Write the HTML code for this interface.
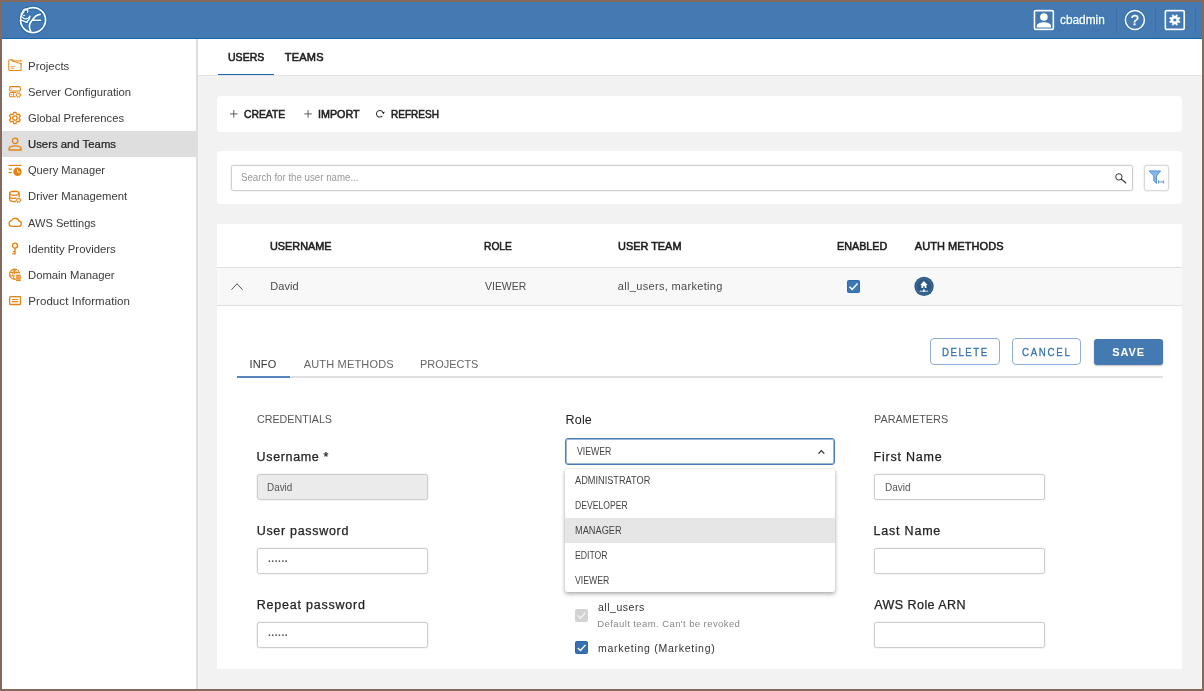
<!DOCTYPE html>
<html lang="en"><head><meta charset="utf-8"><title>CloudBeaver - Users and Teams</title>
<style>
html,body{margin:0;padding:0;}
body{width:1204px;height:691px;position:relative;overflow:hidden;background:#f2f2f2;font-family:"Liberation Sans",sans-serif;}
.a{position:absolute;box-sizing:border-box;}
.t{position:absolute;white-space:pre;transform-origin:0 0;font-family:"Liberation Sans",sans-serif;}
.frame{position:absolute;left:0;top:0;width:1204px;height:691px;box-sizing:border-box;border:2px solid #86695d;pointer-events:none;}
.hdr{left:2px;top:2px;width:1200px;height:37px;background:#4479b1;border-bottom:1.5px solid #1368ad;}
.side{left:2px;top:39px;width:196px;height:650px;background:#fff;border-right:2px solid #dedede;}
.sel{left:2px;top:131px;width:194px;height:26px;background:#dedede;}
.tabs{left:198px;top:39px;width:1004px;height:37px;background:#fff;border-bottom:1px solid #e3e3e3;}
.card{background:#fff;border-radius:4px;}
.inp{background:#fff;border:1px solid #cdcdcd;border-radius:2.5px;box-shadow:0 0 0 .6px rgba(0,0,0,.07);}
.btn{border:1px solid #8eaed6;border-radius:4px;background:#fff;}
svg{position:absolute;overflow:visible;}
.txt{position:absolute;left:0;top:0;width:1204px;height:691px;will-change:transform;}

</style></head>
<body>
<div class="a hdr"></div>
<div class="a side"></div>
<div class="a sel"></div>
<div class="a tabs"></div>
<div class="a" style="left:217.5px;top:73.8px;width:56.5px;height:1.6px;background:#1d68b2;"></div>
<!-- header dividers -->
<div class="a" style="left:1116px;top:8px;width:1px;height:25px;background:rgba(0,0,0,.08);"></div>
<div class="a" style="left:1155px;top:8px;width:1px;height:25px;background:rgba(0,0,0,.08);"></div>
<div class="a" style="left:1195px;top:8px;width:1px;height:25px;background:rgba(0,0,0,.08);"></div>
<!-- cards -->
<div class="a card" style="left:217.3px;top:95.8px;width:965px;height:36.2px;"></div>
<div class="a card" style="left:217.3px;top:151.3px;width:965px;height:52.8px;"></div>
<div class="a inp" style="left:231px;top:165px;width:902px;height:25.5px;"></div>
<div class="a" style="left:1143.6px;top:165px;width:25.6px;height:25.6px;border:1px solid #d9d9d9;border-radius:3px;background:#fff;box-shadow:0 0 0 .7px rgba(0,0,0,.07);"></div>
<div class="a card" style="left:217.4px;top:223.7px;width:964.9px;height:445.3px;border-radius:0;"></div>
<div class="a" style="left:217.4px;top:267px;width:964.9px;height:38.7px;background:#f8f8f8;border-top:1px solid #e1e1e1;border-bottom:1px solid #e1e1e1;"></div>
<!-- inner tabs -->
<div class="a" style="left:237px;top:376.1px;width:925.7px;height:1.8px;background:#e0e0e0;"></div>
<div class="a" style="left:237px;top:376.1px;width:53px;height:1.8px;background:#5585bd;"></div>
<!-- buttons -->
<div class="a btn" style="left:930.3px;top:338.3px;width:69.4px;height:26.4px;"></div>
<div class="a btn" style="left:1012.3px;top:338.3px;width:69px;height:26.4px;"></div>
<div class="a" style="left:1094.3px;top:338.6px;width:68.4px;height:26px;border-radius:3px;background:#4479b1;box-shadow:0 1px 2px rgba(0,0,0,.25);"></div>
<!-- inputs left -->
<div class="a inp" style="left:257px;top:474.3px;width:171px;height:26px;background:#ebebeb;"></div>
<div class="a inp" style="left:257px;top:548.3px;width:171px;height:26px;"></div>
<div class="a inp" style="left:257px;top:622.3px;width:171px;height:26px;"></div>
<!-- inputs right -->
<div class="a inp" style="left:874.2px;top:474.3px;width:170.8px;height:26px;"></div>
<div class="a inp" style="left:874.2px;top:548.3px;width:170.8px;height:26px;"></div>
<div class="a inp" style="left:874.2px;top:622.3px;width:170.8px;height:26px;"></div>
<!-- team checkboxes -->
<div class="a" style="left:575.2px;top:609px;width:12.8px;height:12.6px;border-radius:2px;background:#d2d2d2;"></div>
<svg style="left:575px;top:609px" width="12.8" height="12.6" viewBox="0 0 13 13"><g transform="translate(0.2 0.0)"><path d="M2.6 6.8 L5.3 9.4 L10.6 3.6" fill="none" stroke="#f2f2f2" stroke-width="1.5"/></g></svg>
<div class="a" style="left:575.2px;top:641.4px;width:12.8px;height:12.6px;border-radius:1.5px;background:#3571b2;border:1px solid #2768ae;"></div>
<svg style="left:575px;top:641px" width="12.8" height="12.6" viewBox="0 0 13 13"><g transform="translate(0.2 0.4)"><path d="M2.6 6.8 L5.3 9.4 L10.6 3.6" fill="none" stroke="#fff" stroke-width="1.5"/></g></svg>
<!-- select -->
<div class="a" style="left:565px;top:438px;width:270px;height:27px;border:1px solid #4a7db8;border-radius:3px;background:#fff;box-shadow:inset 0 0 0 1px rgba(74,125,184,.55);"></div>
<svg style="left:818px;top:449px" width="6.8" height="4.6" viewBox="0 0 6.8 4.6"><g transform="translate(0.0 0.5)"><path d="M0.5 4.1 L3.4 1.1 L6.3 4.1" fill="none" stroke="#333" stroke-width="1.3"/></g></svg>
<!-- dropdown -->
<div class="a" style="left:565px;top:468.5px;width:270px;height:123.4px;background:#fff;border-radius:2px;box-shadow:0 2px 4px rgba(0,0,0,.32),0 0 2px rgba(0,0,0,.12);"></div>
<div class="a" style="left:565px;top:518px;width:270px;height:24.6px;background:#e6e6e6;"></div>
<!-- row checkbox -->
<div class="a" style="left:846.8px;top:280px;width:13.2px;height:13px;border-radius:1.5px;background:#3d78b5;border:1px solid #2a6cb1;"></div>
<svg style="left:846px;top:280px" width="13.2" height="13" viewBox="0 0 13 13"><g transform="translate(0.8 0.0)"><path d="M2.6 6.8 L5.3 9.4 L10.6 3.6" fill="none" stroke="#fff" stroke-width="1.5"/></g></svg>
<!-- row chevron -->
<svg style="left:231px;top:283px" width="12" height="7.2" viewBox="0 0 12 7.2"><g transform="translate(0.0 0.0)"><path d="M0.4 6.8 L6 0.8 L11.6 6.8" fill="none" stroke="#555" stroke-width="1"/></g></svg>
<svg style="left:19px;top:6px" width="27" height="27" viewBox="0 0 27 27" fill="none" stroke="#fff" stroke-linecap="round" stroke-linejoin="round"><g transform="translate(0.8 0.5)">
<circle cx="13.25" cy="13.55" r="12.55" stroke="#1463ac" stroke-width="3.4" opacity=".85"/>
<g stroke="#1463ac" opacity=".75" stroke-width="3">
<path d="M20.3 7.8 C18.6 7.9 17.2 8.6 16.1 9.4 C14.9 10.3 14 11.4 13.25 12.5 C12.2 13.9 11.3 15 10.65 16.1 C10 17.3 9.6 18.6 9.6 19.8 C9.6 21.6 10 23.2 10.9 24.6"/><path d="M13.2 13.8 H20.8"/>
<path d="M2.5 10.6 C3.8 12.2 6 12.7 7.9 11.9 C9.1 11.3 9.8 10.5 10.1 9.6 C9.8 12 8.8 13.8 7.4 15"/><path d="M1.6 13.6 L7.4 16"/>
<path d="M1.2 7.6 C2 6.6 2.6 5.8 3 4.8 C3.4 3.6 4.1 2.9 4.9 2.6 C6 2.1 7.2 2.5 7.8 3.6 C8.2 4.4 8.1 5.2 7.8 5.8"/>
</g>
<circle cx="13.25" cy="13.55" r="12.5" stroke-width="1.75"/>
<path d="M1.2 7.6 C2 6.6 2.6 5.8 3 4.8 C3.4 3.6 4.1 2.9 4.9 2.6 C6 2.1 7.2 2.5 7.8 3.6 C8.2 4.4 8.1 5.2 7.8 5.8" stroke-width="1.3"/>
<ellipse cx="4.2" cy="9" rx="1" ry=".8" fill="#fff" stroke="none"/>
<path d="M2.5 10.6 C3.8 12.2 6 12.7 7.9 11.9 C9.1 11.3 9.8 10.5 10.1 9.6" stroke-width="1.35"/>
<path d="M1.6 13.6 L7.4 16 M10.1 9.8 C9.8 12 8.8 13.8 7.4 15" stroke-width="1.4"/>
<path d="M20.3 7.8 C18.6 7.9 17.2 8.6 16.1 9.4 C14.9 10.3 14 11.4 13.25 12.5 C12.2 13.9 11.3 15 10.65 16.1 C10 17.3 9.6 18.6 9.6 19.8 C9.6 21.6 10 23.2 10.9 24.6" stroke-width="1.8"/>
<path d="M13.2 13.8 H20.8" stroke-width="1.5"/>
<circle cx="5.6" cy="4.7" r=".75" fill="#1a3f9a" stroke="none"/>
</g></svg>
<svg style="left:1033px;top:9px" width="20.6" height="20.6" viewBox="0 0 20.6 20.6"><g transform="translate(0.6 0.7)">
<rect x=".85" y=".85" width="18.9" height="18.9" rx="1.2" fill="none" stroke="#1463ac" stroke-width="3" opacity=".45"/>
<rect x=".85" y=".85" width="18.9" height="18.9" rx="1.2" fill="none" stroke="#fff" stroke-width="1.7"/>
<circle cx="10.3" cy="7.3" r="3.8" fill="#fff"/>
<path d="M3.2 17.7 V16.2 C3.2 13.6 7.6 12.5 10.3 12.5 C13 12.5 17.4 13.6 17.4 16.2 V17.7 Z" fill="#fff"/>
</g></svg>
<svg style="left:1124px;top:9px;will-change:transform" width="20.8" height="20.8" viewBox="0 0 20.8 20.8"><g transform="translate(0.5 0.6)">
<circle cx="10.4" cy="10.4" r="9.5" fill="none" stroke="#1463ac" stroke-width="3" opacity=".45"/>
<circle cx="10.4" cy="10.4" r="9.5" fill="none" stroke="#fff" stroke-width="1.6"/>
<text x="10.4" y="15.6" text-anchor="middle" font-family="Liberation Sans, sans-serif" font-size="14.5" fill="#fff" stroke="#fff" stroke-width=".3">?</text>
</g></svg>
<svg style="left:1164px;top:9px" width="20.6" height="20.6" viewBox="0 0 20.6 20.6"><g transform="translate(0.5 0.7)">
<rect x=".85" y=".85" width="18.9" height="18.9" rx="1.2" fill="none" stroke="#1463ac" stroke-width="3" opacity=".45"/>
<rect x=".85" y=".85" width="18.9" height="18.9" rx="1.2" fill="none" stroke="#fff" stroke-width="1.7"/>
<path d="M14.24 11.00 L15.59 11.79 L15.10 12.99 L13.58 12.59 L12.59 13.58 L12.99 15.10 L11.79 15.59 L11.00 14.24 L9.60 14.24 L8.81 15.59 L7.61 15.10 L8.01 13.58 L7.02 12.59 L5.50 12.99 L5.01 11.79 L6.36 11.00 L6.36 9.60 L5.01 8.81 L5.50 7.61 L7.02 8.01 L8.01 7.02 L7.61 5.50 L8.81 5.01 L9.60 6.36 L11.00 6.36 L11.79 5.01 L12.99 5.50 L12.59 7.02 L13.58 8.01 L15.10 7.61 L15.59 8.81 L14.24 9.60 Z M12.1 10.3 A1.8 1.8 0 1 0 8.5 10.3 A1.8 1.8 0 1 0 12.1 10.3 Z" fill="#fff" fill-rule="evenodd" stroke="#fff" stroke-width=".5" stroke-linejoin="round"/>
</g></svg>
<svg style="left:8px;top:59px" width="13.8" height="12.4" viewBox="0 0 13.8 12.4" fill="none" stroke="#e7820e" stroke-width="1.05" stroke-linecap="round" stroke-linejoin="round"><g transform="translate(0.1 0.0)"><path d="M.7 10.5 V1.7 a.9 .9 0 0 1 .9 -.9 H4.7 L5.9 2.1 H11.3 M13 4.2 V10.5 a1 1 0 0 1 -1 1 H1.7 a1 1 0 0 1 -1 -1"/>
<path d="M3.4 1.6 L12.9 4.8" stroke-width="1"/><circle cx="12.7" cy="1.7" r=".85" fill="#e7820e" stroke="none"/>
<path d="M2.9 7.7 H6.9 M2.9 9.3 H5.6" stroke-width=".9" opacity=".8"/></g></svg>
<svg style="left:9px;top:86px" width="12.2" height="11.8" viewBox="0 0 12.2 11.8" fill="none" stroke="#e7820e" stroke-width="1.1" stroke-linecap="round" stroke-linejoin="round"><g transform="translate(0.0 0.0)"><rect x=".65" y=".65" width="10.7" height="4.3" rx="1"/><circle cx="2.8" cy="2.8" r=".65" fill="#e7820e" stroke="none"/>
<path d="M6.3 10.8 H1.65 a1 1 0 0 1 -1 -1 V7.5 a1 1 0 0 1 1 -1 H7"/><circle cx="2.8" cy="8.65" r=".65" fill="#e7820e" stroke="none"/><path d="M4.6 7.5 V9.8" stroke-width=".9"/>
<path d="M11.12 8.47 L11.96 8.54 L11.96 9.46 L11.12 9.53 L10.76 10.14 L11.12 10.90 L10.33 11.36 L9.85 10.66 L9.15 10.66 L8.67 11.36 L7.88 10.90 L8.24 10.14 L7.88 9.53 L7.04 9.46 L7.04 8.54 L7.88 8.47 L8.24 7.86 L7.88 7.10 L8.67 6.64 L9.15 7.34 L9.85 7.34 L10.33 6.64 L11.12 7.10 L10.76 7.86 Z" stroke-width=".95"/></g></svg>
<svg style="left:8px;top:111px" width="12.6" height="12.6" viewBox="0 0 12.6 12.6" fill="none" stroke="#e7820e" stroke-width="1.3" stroke-linecap="round" stroke-linejoin="round"><g transform="translate(0.6 0.7)"><path d="M7.70 10.47 L7.39 12.00 L5.21 12.00 L4.90 10.47 L3.39 9.60 L1.91 10.09 L0.82 8.21 L1.99 7.17 L1.99 5.43 L0.82 4.39 L1.91 2.51 L3.39 3.00 L4.90 2.13 L5.21 0.60 L7.39 0.60 L7.70 2.13 L9.21 3.00 L10.69 2.51 L11.78 4.39 L10.61 5.43 L10.61 7.17 L11.78 8.21 L10.69 10.09 L9.21 9.60 Z"/><circle cx="6.3" cy="6.3" r="2.2"/></g></svg>
<svg style="left:8px;top:137px" width="13.6" height="13.4" viewBox="0 0 13.6 13.4" fill="none" stroke="#e7820e" stroke-width="1.3" stroke-linecap="round" stroke-linejoin="round"><g transform="translate(0.3 0.4)"><circle cx="6.8" cy="3.4" r="2.75" stroke-width="1.3"/><path d="M.75 12.6 V11.5 C.75 9.3 3.7 8.4 6.8 8.4 C9.9 8.4 12.85 9.3 12.85 11.5 V12.6 Z" stroke-width="1.3"/></g></svg>
<svg style="left:8px;top:164px" width="13.6" height="11.8" viewBox="0 0 13.6 11.8" fill="none" stroke="#e7820e" stroke-width="1.3" stroke-linecap="round" stroke-linejoin="round"><g transform="translate(0.3 0.6)"><path d="M.3 .8 H13.3" stroke-width="1.2" stroke-linecap="butt"/><path d="M.3 4.5 H3.5 M.3 8.1 H3.5" stroke-width="1.2" stroke-linecap="butt"/>
<circle cx="9.2" cy="7.2" r="4.2" fill="#e7820e" stroke="none"/><path d="M9.2 4.9 V7.4 H11.3" stroke="#fff" stroke-width="1"/></g></svg>
<svg style="left:9px;top:190px" width="12.2" height="12.2" viewBox="0 0 12.2 12.2" fill="none" stroke="#e7820e" stroke-width="1.3" stroke-linecap="round" stroke-linejoin="round"><g transform="translate(0.0 0.6)"><ellipse cx="5.4" cy="2.7" rx="4.7" ry="2.05"/><path d="M.7 2.7 V9 C.7 10.1 2.7 11 5.4 11 C5.9 11 6.3 10.97 6.7 10.9 M10.1 2.7 V6.2 M.7 5.8 C.7 6.9 2.7 7.8 5.4 7.8 C6 7.8 6.5 7.77 7 7.65"/>
<path d="M11.12 9.11 L11.96 9.16 L11.96 10.04 L11.12 10.09 L10.79 10.67 L11.16 11.42 L10.40 11.86 L9.93 11.17 L9.27 11.17 L8.80 11.86 L8.04 11.42 L8.41 10.67 L8.08 10.09 L7.24 10.04 L7.24 9.16 L8.08 9.11 L8.41 8.53 L8.04 7.78 L8.80 7.34 L9.27 8.03 L9.93 8.03 L10.40 7.34 L11.16 7.78 L10.79 8.53 Z" stroke-width="1"/></g></svg>
<svg style="left:8px;top:217px" width="13.8" height="9.2" viewBox="0 0 13.8 9.2" fill="none" stroke="#e7820e" stroke-width="1.3" stroke-linecap="round" stroke-linejoin="round"><g transform="translate(0.2 0.9)"><path d="M3.6 8.45 H10.5 a2.65 2.65 0 0 0 .35 -5.28 A4.05 4.05 0 0 0 3.3 2.7 A2.9 2.9 0 0 0 3.6 8.45 Z" stroke-width="1.3"/></g></svg>
<svg style="left:11px;top:242px" width="7.2" height="13" viewBox="0 0 7.2 13" fill="none" stroke="#e7820e" stroke-width="1.3" stroke-linecap="round" stroke-linejoin="round"><g transform="translate(0.4 0.3)"><circle cx="3.6" cy="3.3" r="2.5" stroke-width="1.4"/><path d="M3.6 5.9 V12.2 M3.6 9.3 H1.6 M3.6 11.6 H.8" stroke-width="1.4" stroke-linecap="butt"/></g></svg>
<svg style="left:9px;top:268px" width="12.2" height="12.6" viewBox="0 0 12.2 12.6" fill="none" stroke="#e7820e" stroke-width="1.3" stroke-linecap="round" stroke-linejoin="round"><g transform="translate(0.0 0.7)"><path d="M6.4 10.5 A5 5 0 1 1 10.5 4.2" stroke-width="1.3"/><path d="M5.5 .7 C3.2 3.3 3.2 7.7 5.5 10.4 M5.5 .7 C6.9 2.1 7.6 3.3 7.8 4.5 M1 3.8 H10 M1 7.2 H5.8 M5.5 .7 V5" stroke-width=".9"/>
<rect x="7.1" y="6" width="4.8" height="6.2" fill="#f2be94" stroke="none"/><path d="M7.1 6.6 H11.9 M7.1 8.4 H11.9 M7.1 10.2 H11.9 M7.1 11.9 H11.9" stroke-width=".9" stroke-linecap="butt"/></g></svg>
<svg style="left:9px;top:295px" width="12.2" height="9.3" viewBox="0 0 12.2 9.3" fill="none" stroke="#e7820e" stroke-width="1.3" stroke-linecap="round" stroke-linejoin="round"><g transform="translate(0.0 0.9)"><rect x=".7" y=".7" width="10.8" height="7.9" rx=".8" stroke-width="1.3"/><path d="M3.3 3.6 H8.9 M3.3 5.7 H8.9" stroke-width="1.1"/></g></svg>
<svg style="left:229px;top:109px" width="8" height="8" viewBox="0 0 8 8"><g transform="translate(0.8 0.9)"><path d="M4 .2 V7.8 M.2 4 H7.8" stroke="#444" stroke-width=".85" fill="none"/></g></svg>
<svg style="left:304px;top:109px" width="8" height="8" viewBox="0 0 8 8"><g transform="translate(0.1 0.9)"><path d="M4 .2 V7.8 M.2 4 H7.8" stroke="#444" stroke-width=".85" fill="none"/></g></svg>
<svg style="left:375px;top:109px" width="10" height="9" viewBox="0 0 10 9" fill="none" stroke="#333" stroke-width="1.05"><g transform="translate(0.5 0.5)"><path d="M6.85 6.3 A3.3 3.3 0 1 1 7.2 2.75"/><path d="M6.3 2.7 L9.3 2.2 L8.1 4.7 Z" fill="#222" stroke="none"/></g></svg>
<svg style="left:1114px;top:172px" width="12" height="11" viewBox="0 0 12 11" fill="none" stroke="#333" stroke-width="1"><g transform="translate(0.8 0.8)"><circle cx="4.1" cy="4.1" r="3.2"/><path d="M6.5 6.3 L10.9 10" stroke-width="1.2" stroke-linecap="round"/></g></svg>
<svg style="left:1148px;top:170px" width="16" height="14" viewBox="0 0 16 14"><g transform="translate(0.6 0.4)"><path d="M.5 .5 H12 L7.9 5.6 V13 L5.2 10.6 V5.6 Z" fill="#86b7e6" stroke="#4a8fd8" stroke-width=".9" stroke-linejoin="round"/><path d="M9.8 11.5 H15.2 M10 10 V13 M15 10 V13" stroke="#4a8fd6" stroke-width=".9" fill="none"/></g></svg>
<svg style="left:913px;top:275px" width="21.3" height="21.3" viewBox="-1 -1 21.3 21.3"><g transform="translate(0.4 0.7)">
<circle cx="9.65" cy="9.7" r="10.3" fill="#fff"/>
<circle cx="9.65" cy="9.7" r="9.65" fill="#2b5986"/>
<circle cx="9.65" cy="9.7" r="7.9" fill="none" stroke="#426c97" stroke-width="1.1"/>
<path d="M9.5 4.2 L13.1 8.2 H12 V11.2 H10.3 V9.5 H8.7 V11.2 H7 V8.2 H5.9 Z" fill="#fff"/>
<path d="M9.5 12.2 V14.2" stroke="#fff" stroke-width="1"/>
<path d="M5.3 14.5 H13.7" stroke="#c3d0de" stroke-width="1.2"/>
<circle cx="9.5" cy="14.5" r="1" fill="#fff"/>
</g></svg>
<div class="txt">
<span class="t" style="left:1060.4px;top:14px;font-size:12px;line-height:12px;font-weight:400;color:#fff;transform:scaleX(0.9877);-webkit-text-stroke:0.3px #fff;text-shadow:0 0 1.5px #1463ac,0 0 1px #1463ac;">cbadmin</span>
<span class="t" style="left:28.3px;top:61px;font-size:11.5px;line-height:11.5px;font-weight:400;color:#3a3a3a;transform:scaleX(0.9941);">Projects</span>
<span class="t" style="left:28.3px;top:87px;font-size:11.5px;line-height:11.5px;font-weight:400;color:#3a3a3a;transform:scaleX(0.9774);">Server Configuration</span>
<span class="t" style="left:28.3px;top:113px;font-size:11.5px;line-height:11.5px;font-weight:400;color:#3a3a3a;transform:scaleX(0.9751);">Global Preferences</span>
<span class="t" style="left:28.3px;top:139px;font-size:11.5px;line-height:11.5px;font-weight:400;color:#222;transform:scaleX(0.9856);-webkit-text-stroke:0.22px #222;">Users and Teams</span>
<span class="t" style="left:28.3px;top:165px;font-size:11.5px;line-height:11.5px;font-weight:400;color:#3a3a3a;transform:scaleX(0.9636);">Query Manager</span>
<span class="t" style="left:28.3px;top:191px;font-size:11.5px;line-height:11.5px;font-weight:400;color:#3a3a3a;transform:scaleX(0.9813);">Driver Management</span>
<span class="t" style="left:28.3px;top:218px;font-size:11.5px;line-height:11.5px;font-weight:400;color:#3a3a3a;transform:scaleX(0.9627);">AWS Settings</span>
<span class="t" style="left:28.3px;top:244px;font-size:11.5px;line-height:11.5px;font-weight:400;color:#3a3a3a;transform:scaleX(0.9881);">Identity Providers</span>
<span class="t" style="left:28.3px;top:270px;font-size:11.5px;line-height:11.5px;font-weight:400;color:#3a3a3a;transform:scaleX(0.9817);">Domain Manager</span>
<span class="t" style="left:28.3px;top:296px;font-size:11.5px;line-height:11.5px;font-weight:400;color:#3a3a3a;letter-spacing:0.069px;">Product Information</span>
<span class="t" style="left:227.7px;top:52px;font-size:11px;line-height:11px;font-weight:400;color:#222;transform:scaleX(0.9576);-webkit-text-stroke:0.55px #1c1c1c;">USERS</span>
<span class="t" style="left:284.7px;top:52px;font-size:11px;line-height:11px;font-weight:400;color:#222;letter-spacing:0.248px;-webkit-text-stroke:0.55px #1c1c1c;">TEAMS</span>
<span class="t" style="left:244.0px;top:109px;font-size:11px;line-height:11px;font-weight:400;color:#222;transform:scaleX(0.9404);-webkit-text-stroke:0.55px #1c1c1c;">CREATE</span>
<span class="t" style="left:318.4px;top:109px;font-size:11px;line-height:11px;font-weight:400;color:#222;transform:scaleX(0.9770);-webkit-text-stroke:0.55px #1c1c1c;">IMPORT</span>
<span class="t" style="left:390.6px;top:109px;font-size:11px;line-height:11px;font-weight:400;color:#222;transform:scaleX(0.9113);-webkit-text-stroke:0.55px #1c1c1c;">REFRESH</span>
<span class="t" style="left:241.2px;top:173px;font-size:10px;line-height:10px;font-weight:400;color:#999;transform:scaleX(0.9697);">Search for the user name...</span>
<span class="t" style="left:270.0px;top:241px;font-size:11px;line-height:11px;font-weight:400;color:#222;transform:scaleX(0.9881);-webkit-text-stroke:0.55px #1c1c1c;">USERNAME</span>
<span class="t" style="left:484.3px;top:241px;font-size:11px;line-height:11px;font-weight:400;color:#222;transform:scaleX(0.9310);-webkit-text-stroke:0.55px #1c1c1c;">ROLE</span>
<span class="t" style="left:617.8px;top:241px;font-size:11px;line-height:11px;font-weight:400;color:#222;transform:scaleX(0.9924);-webkit-text-stroke:0.55px #1c1c1c;">USER TEAM</span>
<span class="t" style="left:837.3px;top:241px;font-size:11px;line-height:11px;font-weight:400;color:#222;transform:scaleX(0.9794);-webkit-text-stroke:0.55px #1c1c1c;">ENABLED</span>
<span class="t" style="left:914.8px;top:241px;font-size:11px;line-height:11px;font-weight:400;color:#222;letter-spacing:0.064px;-webkit-text-stroke:0.55px #1c1c1c;">AUTH METHODS</span>
<span class="t" style="left:270.3px;top:281px;font-size:11px;line-height:11px;font-weight:400;color:#4a4a4a;letter-spacing:0.069px;">David</span>
<span class="t" style="left:484.5px;top:281px;font-size:11px;line-height:11px;font-weight:400;color:#4a4a4a;transform:scaleX(0.9515);">VIEWER</span>
<span class="t" style="left:617.8px;top:281px;font-size:11px;line-height:11px;font-weight:400;color:#4a4a4a;letter-spacing:0.324px;">all_users, marketing</span>
<span class="t" style="left:249.6px;top:359px;font-size:11px;line-height:11px;font-weight:400;color:#333;letter-spacing:0.106px;">INFO</span>
<span class="t" style="left:303.7px;top:359px;font-size:11px;line-height:11px;font-weight:400;color:#666;letter-spacing:0.173px;">AUTH METHODS</span>
<span class="t" style="left:419.6px;top:359px;font-size:11px;line-height:11px;font-weight:400;color:#666;transform:scaleX(0.9951);">PROJECTS</span>
<span class="t" style="left:942.4px;top:347px;font-size:11px;line-height:11px;font-weight:400;color:#3572b0;transform:scaleX(0.88);letter-spacing:1.691px;-webkit-text-stroke:0.3px #3572b0;">DELETE</span>
<span class="t" style="left:1022.4px;top:347px;font-size:11px;line-height:11px;font-weight:400;color:#3572b0;transform:scaleX(0.88);letter-spacing:1.939px;-webkit-text-stroke:0.3px #3572b0;">CANCEL</span>
<span class="t" style="left:1112.3px;top:347px;font-size:11px;line-height:11px;font-weight:700;color:#fff;letter-spacing:0.853px;">SAVE</span>
<span class="t" style="left:257.0px;top:414px;font-size:11px;line-height:11px;font-weight:400;color:#555;transform:scaleX(0.9736);">CREDENTIALS</span>
<span class="t" style="left:873.8px;top:414px;font-size:11px;line-height:11px;font-weight:400;color:#555;transform:scaleX(0.9895);">PARAMETERS</span>
<span class="t" style="left:565.6px;top:414px;font-size:12.5px;line-height:12.5px;font-weight:400;color:#222;letter-spacing:0.160px;">Role</span>
<span class="t" style="left:256.6px;top:451px;font-size:12.5px;line-height:12.5px;font-weight:400;color:#222;letter-spacing:0.644px;-webkit-text-stroke:0.25px #222;">Username *</span>
<span class="t" style="left:256.7px;top:525px;font-size:12.5px;line-height:12.5px;font-weight:400;color:#222;letter-spacing:0.694px;-webkit-text-stroke:0.25px #222;">User password</span>
<span class="t" style="left:256.7px;top:599px;font-size:12.5px;line-height:12.5px;font-weight:400;color:#222;letter-spacing:0.787px;-webkit-text-stroke:0.25px #222;">Repeat password</span>
<span class="t" style="left:873.6px;top:451px;font-size:12.5px;line-height:12.5px;font-weight:400;color:#222;letter-spacing:0.775px;-webkit-text-stroke:0.25px #222;">First Name</span>
<span class="t" style="left:873.6px;top:525px;font-size:12.5px;line-height:12.5px;font-weight:400;color:#222;letter-spacing:0.781px;-webkit-text-stroke:0.25px #222;">Last Name</span>
<span class="t" style="left:874.2px;top:599px;font-size:12.5px;line-height:12.5px;font-weight:400;color:#222;letter-spacing:0.457px;-webkit-text-stroke:0.25px #222;">AWS Role ARN</span>
<span class="t" style="left:267.2px;top:483px;font-size:10px;line-height:10px;font-weight:400;color:#555;transform:scaleX(0.9891);">David</span>
<span class="t" style="left:884.5px;top:483px;font-size:10px;line-height:10px;font-weight:400;color:#555;transform:scaleX(0.9969);">David</span>
<span class="t" style="left:268.0px;top:556px;font-size:11px;line-height:11px;font-weight:700;color:#555;transform:scaleX(0.9188);">······</span>
<span class="t" style="left:268.0px;top:630px;font-size:11px;line-height:11px;font-weight:700;color:#555;transform:scaleX(0.9188);">······</span>
<span class="t" style="left:576.8px;top:447px;font-size:10px;line-height:10px;font-weight:400;color:#444;transform:scaleX(0.8719);">VIEWER</span>
<span class="t" style="left:575.4px;top:476px;font-size:10px;line-height:10px;font-weight:400;color:#444;transform:scaleX(0.9199);">ADMINISTRATOR</span>
<span class="t" style="left:575.4px;top:501px;font-size:10px;line-height:10px;font-weight:400;color:#444;transform:scaleX(0.8603);">DEVELOPER</span>
<span class="t" style="left:575.4px;top:526px;font-size:10px;line-height:10px;font-weight:400;color:#444;transform:scaleX(0.9216);">MANAGER</span>
<span class="t" style="left:575.4px;top:551px;font-size:10px;line-height:10px;font-weight:400;color:#444;transform:scaleX(0.8668);">EDITOR</span>
<span class="t" style="left:575.4px;top:576px;font-size:10px;line-height:10px;font-weight:400;color:#444;transform:scaleX(0.8694);">VIEWER</span>
<span class="t" style="left:598.0px;top:602px;font-size:10.5px;line-height:10.5px;font-weight:400;color:#333;letter-spacing:0.521px;">all_users</span>
<span class="t" style="left:597.3px;top:619px;font-size:9.5px;line-height:9.5px;font-weight:400;color:#888;letter-spacing:0.411px;">Default team. Can't be revoked</span>
<span class="t" style="left:598.0px;top:643px;font-size:10.5px;line-height:10.5px;font-weight:400;color:#333;letter-spacing:0.729px;">marketing (Marketing)</span>
</div>
<div class="frame"></div>
</body></html>
